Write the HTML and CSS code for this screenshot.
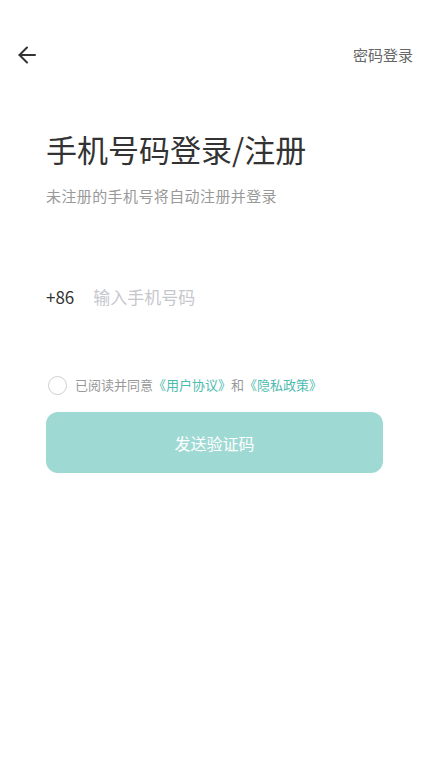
FILE: index.html
```html
<!DOCTYPE html>
<html lang="zh-CN">
<head>
  <meta charset="UTF-8">
  <meta name="viewport" content="width=device-width, initial-scale=1.0">
  <title>手机号码登录</title>
  <link rel="stylesheet" href="styles.css">
</head>
<body>
  <div class="header">
    <button class="back" aria-label="返回">
      <svg width="18" height="18" viewBox="0 0 18 18" fill="none" stroke="#333" stroke-width="2" stroke-linecap="round" stroke-linejoin="round">
        <path d="M17 9H1.5"/>
        <path d="M9 1.5L1.5 9L9 16.5"/>
      </svg>
    </button>
    <span class="pwd-login">密码登录</span>
  </div>

  <div class="content">
    <h1 class="title">手机号码登录/注册</h1>
    <p class="subtitle">未注册的手机号将自动注册并登录</p>

    <div class="phone-row">
      <span class="prefix">+86</span>
      <input class="phone-input" type="tel" placeholder="输入手机号码">
    </div>

    <div class="agree">
      <span class="radio"></span>
      <span class="agree-text">已阅读并同意<a class="link">《用户协议》</a>和<a class="link">《隐私政策》</a></span>
    </div>

    <button class="send-btn">发送验证码</button>
  </div>
</body>
</html>
```

FILE: styles.css
```css
html, body {
  width: 100%;
  height: 100%;
  overflow: hidden;
}

body {
  margin: 0;
  padding: 0;
  background: #fff;
  font-family: "Noto Sans CJK SC", "Noto Sans", sans-serif;
  color: #333;
}

.header {
  display: flex;
  justify-content: space-between;
  align-items: center;
  height: 20px;
  margin-top: 45px;
  padding: 0 16px 0 18px;
}

.back {
  display: flex;
  padding: 0;
  border: none;
  background: none;
  cursor: pointer;
}

.pwd-login {
  font-size: 15px;
  line-height: 20px;
  color: #666;
}

.content {
  padding: 0 46px;
}

.title {
  margin: 66px 0 0;
  font-size: 31px;
  line-height: 36px;
  font-weight: 400;
  color: #333;
}

.subtitle {
  margin: 19px 0 0;
  font-size: 15px;
  line-height: 20px;
  letter-spacing: 0.4px;
  color: #999;
}

.phone-row {
  display: flex;
  align-items: center;
  gap: 19px;
  height: 24px;
  margin-top: 79px;
}

.prefix {
  font-size: 17px;
  line-height: 24px;
  color: #333;
}

.phone-input {
  flex: 1;
  min-width: 0;
  padding: 0;
  border: none;
  outline: none;
  font-family: inherit;
  font-size: 17px;
  line-height: 24px;
  color: #333;
  background: transparent;
}

.phone-input::placeholder {
  color: #c6c7cc;
}

.agree {
  display: flex;
  align-items: center;
  gap: 8px;
  height: 20px;
  margin-top: 66px;
  padding-left: 2px;
}

.radio {
  box-sizing: border-box;
  width: 19px;
  height: 19px;
  border: 1px solid #cfcfcf;
  border-radius: 50%;
}

.agree-text {
  font-size: 13px;
  line-height: 20px;
  color: #999;
}

.link {
  color: #4dbbae;
}

.send-btn {
  display: block;
  width: 100%;
  height: 61px;
  margin-top: 17px;
  border: none;
  border-radius: 12px;
  background: #9fd9d3;
  color: #fff;
  font-family: inherit;
  font-size: 16px;
}
```
